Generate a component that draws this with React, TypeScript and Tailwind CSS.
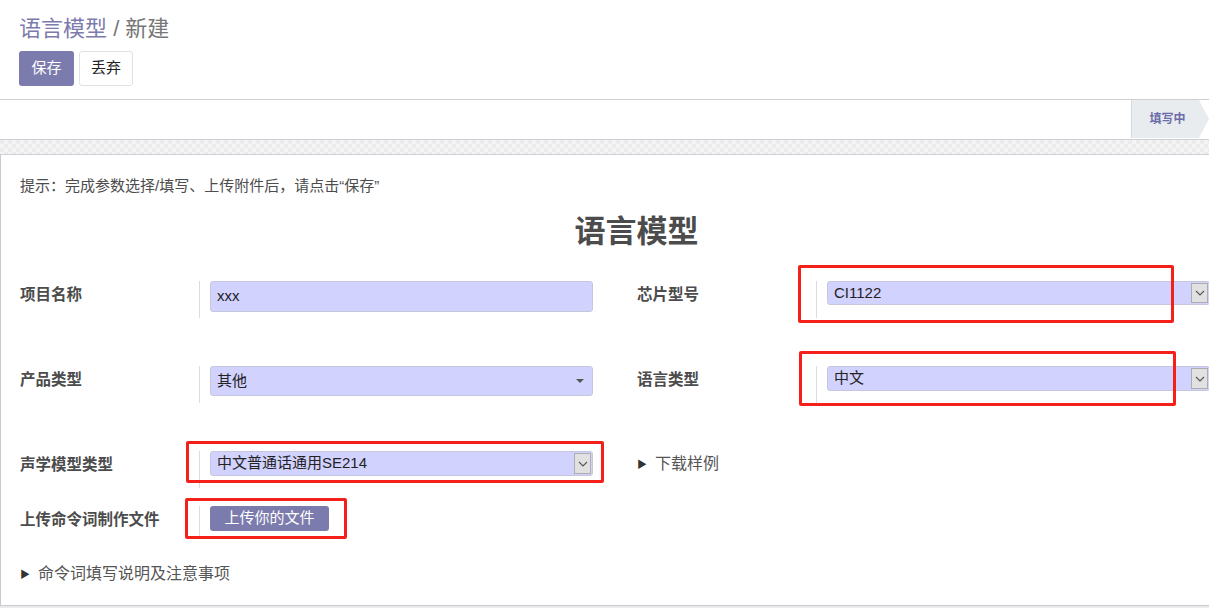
import React from 'react';

// 语言模型 / 新建 — form view

const FONT = { fontFamily: '"Liberation Sans", "Noto Sans CJK SC", sans-serif' };

function Chevron() {
  return (
    <svg width="10" height="6" viewBox="0 0 10 6" aria-hidden="true">
      <path d="M1 1 L5 5 L9 1" fill="none" stroke="#555" strokeWidth="1.1" />
    </svg>
  );
}

// native-looking select: lilac field + grey arrow box
function NativeSelect({ value, h = 24 }: { value: string; h?: number }) {
  return (
    <div className="flex w-[383px] rounded-[3px] border border-[#c6c6dc] bg-[#d2d2ff]" style={{ height: h }}>
      <div className="flex flex-1 items-center px-[6px] text-[15px] text-[#222]">{value}</div>
      <div className="my-[1px] mr-[1px] flex w-[17px] items-center justify-center border border-[#adadad] bg-[#e1e1e1]">
        <Chevron />
      </div>
    </div>
  );
}

function Label({ children }: { children: React.ReactNode }) {
  return (
    <div className="w-[179px] shrink-0 pt-[3px] text-[15.5px] font-bold leading-[22px] text-[#4c4c4c]">{children}</div>
  );
}

function Cell({ children, h = 37 }: { children: React.ReactNode; h?: number }) {
  return (
    <div className="border-l border-[#dcdcdc] pl-[10px]" style={{ minHeight: h }}>
      {children}
    </div>
  );
}

function Disclosure({ text }: { text: string }) {
  return (
    <div className="flex items-center gap-[8px] text-[16px] text-[#555]">
      <span className="text-[10px] text-[#333]">▶</span>
      <span>{text}</span>
    </div>
  );
}

const RED_BOXES = [
  { l: 798, t: 265, w: 376, h: 58 },
  { l: 799, t: 351, w: 377, h: 55 },
  { l: 186, t: 441, w: 418, h: 42 },
  { l: 185, t: 498, w: 162, h: 41 },
];

export default function App() {
  return (
    <div className="relative h-[608px] w-[1209px] overflow-hidden bg-[#ebebeb]" style={FONT}>
      {/* ── Control panel ── */}
      <div className="border-b border-[#cfcfcf] bg-white px-[19px] pb-[13px] pt-[15px]">
        <div className="text-[22px] leading-[28px]">
          <span className="text-[#7c7bad]">语言模型</span>
          <span className="text-[#777]"> / 新建</span>
        </div>
        <div className="mt-[8px] flex gap-[5px]">
          <button className="h-[35px] w-[55px] rounded-[3px] bg-[#7c7bad] text-[15px] text-white">保存</button>
          <button className="h-[35px] w-[54px] rounded-[3px] border border-[#dee2e6] bg-white text-[15px] text-[#222]">丢弃</button>
        </div>
      </div>

      {/* ── Status bar ── */}
      <div className="flex h-[39px] justify-end bg-white">
        <div className="flex h-[38px] w-[78px] items-center justify-center border-l border-[#d6d8dc] bg-[#e9ecef] pr-[6px] text-[12px] font-bold text-[#6c6ca8] [clip-path:polygon(0_0,calc(100%-10px)_0,100%_50%,calc(100%-10px)_100%,0_100%)]">
          填写中
        </div>
      </div>

      {/* checkered strip */}
      <div className="h-[16px] border-y border-[#cfcfd8] bg-[repeating-conic-gradient(#f4f4f4_0_25%,#ebebeb_0_50%)] bg-[length:8px_8px]" />

      {/* ── Sheet ── */}
      <div className="w-[1272px] border-b border-l border-[#c9c8d3] bg-white pb-[19px] pl-[19px] pt-[21px]">
        <div className="text-[15px] leading-[20px] text-[#4c4c4c]">提示：完成参数选择/填写、上传附件后，请点击“保存”</div>
        <div className="mt-[18px] pr-[19px] text-center text-[31px] font-bold leading-[36px] text-[#4c4c4c]">语言模型</div>

        <div className="mt-[31px] grid grid-cols-[617px_616px]">
          {/* row 1 */}
          <div className="flex">
            <Label>项目名称</Label>
            <Cell>
              <div className="flex h-[31px] w-[383px] items-center rounded-[3px] border border-[#c6c6dc] bg-[#d2d2ff] px-[6px] text-[15px] text-[#222]">xxx</div>
            </Cell>
          </div>
          <div className="flex">
            <Label>芯片型号</Label>
            <Cell h={32}>
              <NativeSelect value="CI1122" />
            </Cell>
          </div>

          {/* row 2 */}
          <div className="mt-[48px] flex">
            <Label>产品类型</Label>
            <Cell>
              <div className="flex h-[30px] w-[383px] items-center justify-between rounded-[3px] border border-[#c6c6dc] bg-[#d2d2ff] pl-[6px] pr-[8px] text-[15px] text-[#222]">
                <span>其他</span>
                <span className="h-0 w-0 border-x-[4px] border-t-[4px] border-x-transparent border-t-[#555]" />
              </div>
            </Cell>
          </div>
          <div className="mt-[48px] flex">
            <Label>语言类型</Label>
            <Cell h={32}>
              <NativeSelect value="中文" h={25} />
            </Cell>
          </div>

          {/* row 3 */}
          <div className="mt-[48px] flex">
            <Label>声学模型类型</Label>
            <Cell>
              <NativeSelect value="中文普通话通用SE214" h={25} />
            </Cell>
          </div>
          <div className="mt-[48px] pt-[1px]">
            <Disclosure text="下载样例" />
          </div>

          {/* row 4 */}
          <div className="mt-[18px] flex">
            <Label>上传命令词制作文件</Label>
            <Cell h={30}>
              <button className="h-[25px] w-[119px] rounded-[3px] bg-[#7c7bad] text-[15px] text-white">上传你的文件</button>
            </Cell>
          </div>
          <div />
        </div>

        <div className="mt-[26px]">
          <Disclosure text="命令词填写说明及注意事项" />
        </div>
      </div>

      {/* annotation boxes */}
      {RED_BOXES.map((b, i) => (
        <div
          key={i}
          className="absolute rounded-[2px] border-[3px] border-[#f5201a]"
          style={{ left: b.l, top: b.t, width: b.w, height: b.h }}
        />
      ))}
    </div>
  );
}
